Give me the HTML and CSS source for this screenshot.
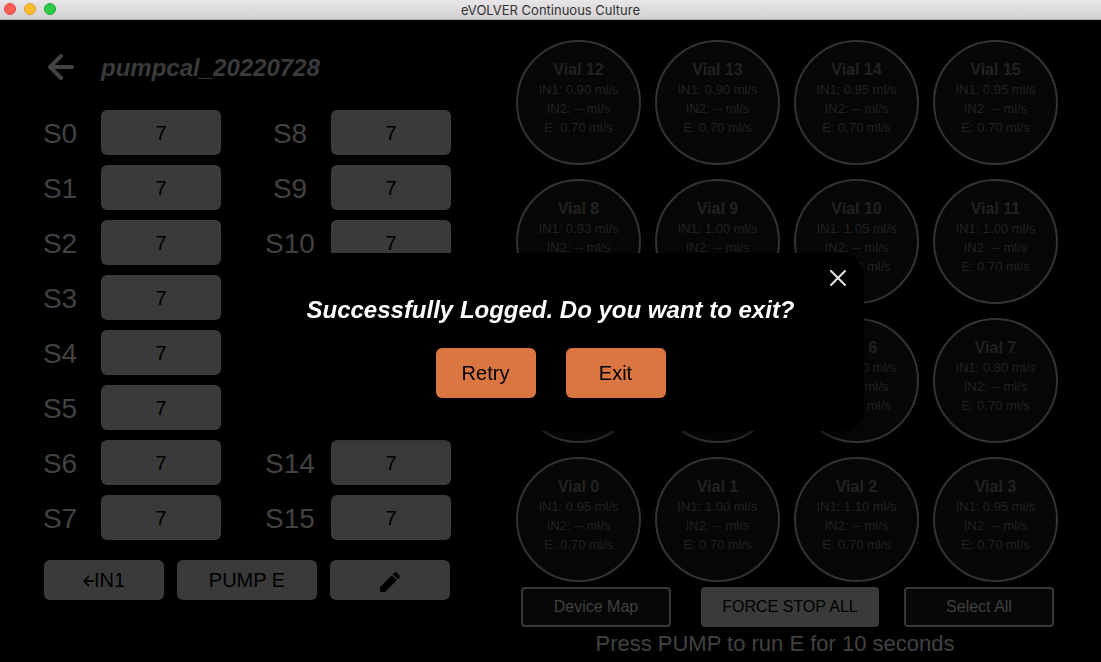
FILE: index.html
```html
<!DOCTYPE html>
<html lang="en">
<head>
<meta charset="utf-8">
<title>eVOLVER Continuous Culture</title>
<link rel="stylesheet" href="styles.css">
</head>
<body>
<header class="titlebar">
  <div class="lights"><span class="light close"></span><span class="light minimize"></span><span class="light expand"></span></div>
  <span class="window-title">eVOLVER Continuous Culture</span>
</header>
<main class="app">
  <section class="controls">
    <div class="heading">
      <button class="back" aria-label="Back"><svg width="26" height="28" viewBox="0 0 26 28"><path d="M13 2 2 13l11 11M3 13h21" fill="none" stroke="currentColor" stroke-width="4" stroke-linecap="round" stroke-linejoin="round"/></svg></button>
      <h1>pumpcal_20220728</h1>
    </div>
    <div class="fields" id="fields"></div>
    <div class="actions">
      <button class="solid"><svg width="11" height="14" viewBox="0 0 11 14"><path d="M5.500 3.500 1.200 8l4.300 4.500M1.500 8h9" fill="none" stroke="currentColor" stroke-width="1.800" stroke-linecap="round" stroke-linejoin="round"/></svg>IN1</button>
      <button class="solid">PUMP E</button>
      <button class="solid" aria-label="Edit"><svg width="20" height="24" viewBox="0 -4 20 24" fill="currentColor"><path d="M0 15 11.800 3.200l5 5L5 20H1Q0 20 0 19ZM12.800 2.200 14.300.700Q15.500-.400 16.800.700L19.300 3.200Q20.400 4.500 19.300 5.700L17.800 7.200Z"/></svg></button>
    </div>
  </section>
  <section class="device">
    <div class="vials" id="vials"></div>
    <div class="selection">
      <button class="outline">Device Map</button>
      <button class="stop">FORCE STOP ALL</button>
      <button class="outline">Select All</button>
    </div>
    <p class="hint">Press PUMP to run E for 10 seconds</p>
  </section>
</main>
<div class="overlay">
  <div class="modal" role="dialog" aria-modal="true" aria-labelledby="question">
    <button class="dismiss" aria-label="Close"><svg width="16" height="16" viewBox="0 0 16 16"><path d="m1 1 14 14M15 1 1 15" stroke="currentColor" stroke-width="2" stroke-linecap="round"/></svg></button>
    <h2 id="question">Successfully Logged. Do you want to exit?</h2>
    <div class="choices"><button>Retry</button><button>Exit</button></div>
  </div>
</div>
<script src="app.js"></script>
</body>
</html>
```
FILE: styles.css
```css
* { box-sizing: border-box; }
body {
  margin: 0;
  min-height: 100vh;
  background: #000;
  color: #424242;
  font-family: "Liberation Sans", Arial, sans-serif;
}
button, input { font: inherit; padding: 0; border: 0; }
h1, h2, p { margin: 0; }
.titlebar {
  position: relative;
  display: flex;
  align-items: center;
  justify-content: center;
  height: 20px;
  background: linear-gradient(#e8e6e8, #d2d0d2);
  border-bottom: 1px solid #b4b2b4;
}
.lights { position: absolute; left: 4px; top: 3px; display: flex; gap: 8px; }
.light { width: 12px; height: 12px; border-radius: 50%; border: 1px solid; }
.close { background: #ff5f57; border-color: #e2463f; }
.minimize { background: #ffbd2e; border-color: #dfa023; }
.expand { background: #2dcb48; border-color: #1daa30; }
.window-title { font: 13px/18px Inter, sans-serif; color: #333; }
.app {
  display: grid;
  grid-template-columns: minmax(0, 416fr) minmax(0, 542fr);
  gap: 65px;
  padding: 0 43px 0 35px;
}
.heading { display: flex; align-items: center; gap: 27px; height: 90px; padding: 6px 0 0 13px; }
.back { display: flex; background: none; color: #424242; }
h1, h2 { font-size: 24px; font-style: italic; line-height: 30px; }
h1 { color: #3a3a3a; }
.fields { display: grid; grid-template-columns: repeat(2, minmax(0, 1fr)); gap: 10px 44px; grid-template-rows: repeat(8, 45px); grid-auto-flow: column; }
.field { display: flex; align-items: center; gap: 16px; }
.field label { width: 50px; padding-top: 2px; text-align: center; font-size: 28px; line-height: 40px; }
.field input {
  flex: 1;
  min-width: 0;
  height: 45px;
  padding-top: 2px;
  border-radius: 6px;
  background: #3a3a3a;
  color: #000;
  font-size: 20px;
  text-align: center;
}
.actions { display: grid; grid-template-columns: 120fr 140fr 120fr; gap: 13px; margin: 20px 1px 0 9px; }
.solid {
  display: flex;
  align-items: center;
  justify-content: center;
  height: 40px;
  border-radius: 6px;
  background: #3a3a3a;
  color: #000;
  font-size: 20px;
}
.device { padding-top: 20px; }
.vials { display: grid; grid-template-columns: repeat(4, minmax(0, 1fr)); gap: 14px; }
.vial {
  aspect-ratio: 1;
  padding-top: 18px;
  border: 2px solid #333;
  border-radius: 50%;
  background: #070707;
  color: #222;
  text-align: center;
  font-size: 13px;
  line-height: 19px;
}
.vial strong { display: block; font-size: 16px; line-height: 20px; }
.vial span { display: block; }
.selection { display: flex; justify-content: space-between; padding: 5px 4px 0 5px; }
.selection button { height: 40px; border-radius: 4px; font-size: 16px; }
.selection .outline { width: 150px; background: #070707; border: 2px solid #383838; color: #404040; }
.selection .stop { width: 178px; margin-left: 5px; background: #3a3a3a; color: #000; }
.hint { text-align: center; font-size: 22px; line-height: 34px; margin-left: -24px; }
.overlay { position: fixed; inset: 22px 0 0; display: flex; align-items: center; justify-content: center; }
.modal {
  position: relative;
  width: 57%;
  padding: 42px 20px 33px;
  border-radius: 24px;
  background: #000;
  box-shadow: 0 6px 8px rgba(0, 0, 0, 0.4);
  text-align: center;
}
h2 { color: #fff; }
.dismiss { position: absolute; top: 13px; right: 14px; display: flex; align-items: center; justify-content: center; width: 24px; height: 24px; background: none; color: #e6e6e6; }
.choices { display: flex; justify-content: center; gap: 30px; margin-top: 23px; }
.choices button { width: 100px; height: 50px; border-radius: 6px; background: #da7641; color: #000; font-size: 20px; }
```
FILE: app.js
```js
const fields = document.getElementById('fields');
for (let i = 0; i < 16; i++) {
  fields.insertAdjacentHTML('beforeend',
    `<div class="field"><label for="s${i}">S${i}</label><input id="s${i}" type="text" value="7"></div>`);
}

const rates = ['0.95', '1.00', '1.10', '0.95', '0.90', '0.95', '0.90', '0.80',
  '0.93', '1.00', '1.05', '1.00', '0.90', '0.90', '0.95', '0.95'];
const vials = document.getElementById('vials');
for (let row = 3; row >= 0; row--) {
  for (let col = 0; col < 4; col++) {
    const n = row * 4 + col;
    vials.insertAdjacentHTML('beforeend',
      `<div class="vial"><strong>Vial ${n}</strong><span>IN1: ${rates[n]} ml/s</span><span>IN2: -- ml/s</span><span>E: 0.70 ml/s</span></div>`);
  }
}
```
